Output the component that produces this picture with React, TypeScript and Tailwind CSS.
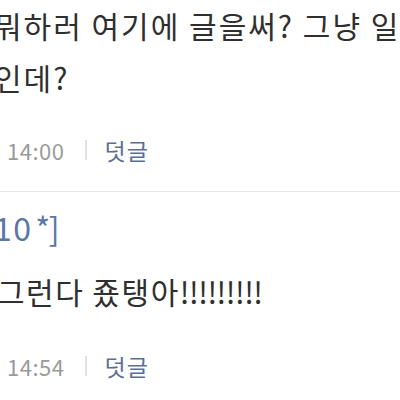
import React from 'react';

const comments = [
  {
    lines: ['뭐하러 여기에 글을써? 그냥 일', '인데?'],
    time: '14:00',
  },
];

function MetaRow({ time }: { time: string }) {
  return (
    <div className="flex items-center h-[30px] pl-[7px] text-[22px] leading-none">
      <span className="text-[#9a9a9a] tracking-[0.5px]">{time}</span>
      <span className="ml-[21px] w-[2px] h-[20px] bg-[#e2e2e2]" />
      <span className="ml-[17px] text-[23px] tracking-[1px] text-[#5b6f96]">덧글</span>
    </div>
  );
}

export default function App() {
  return (
    <div
      className="w-[400px] h-[400px] overflow-hidden bg-white text-[#2f2f2f]"
      style={{ fontFamily: '"Noto Sans CJK KR", "Noto Sans", sans-serif' }}
    >
      {/* first comment */}
      <div className="mt-[-1px] ml-[-6px] text-[30px] tracking-[2px] leading-[52px] whitespace-nowrap">
        {comments[0].lines.map((l) => (
          <div key={l}>{l}</div>
        ))}
      </div>
      <div className="mt-[32px]">
        <MetaRow time={comments[0].time} />
      </div>
      <div className="mt-[26px] border-t border-[#e8e8e8]" />

      {/* second comment */}
      <div className="mt-[15px] h-[40px] flex items-center ml-[-6px] text-[32px] tracking-[-1.5px] text-[#5b76a8] whitespace-nowrap">
        <span>1<span className="ml-[3px]">0 *]</span></span>
      </div>
      <div className="mt-[18px] ml-[-3px] text-[30px] tracking-[1.5px] leading-[52px] whitespace-nowrap">
        그런다 죴탱아<span className="tracking-[-0.5px]">!!!!!!!!!</span>
      </div>
      <div className="mt-[34px]">
        <MetaRow time="14:54" />
      </div>
    </div>
  );
}
